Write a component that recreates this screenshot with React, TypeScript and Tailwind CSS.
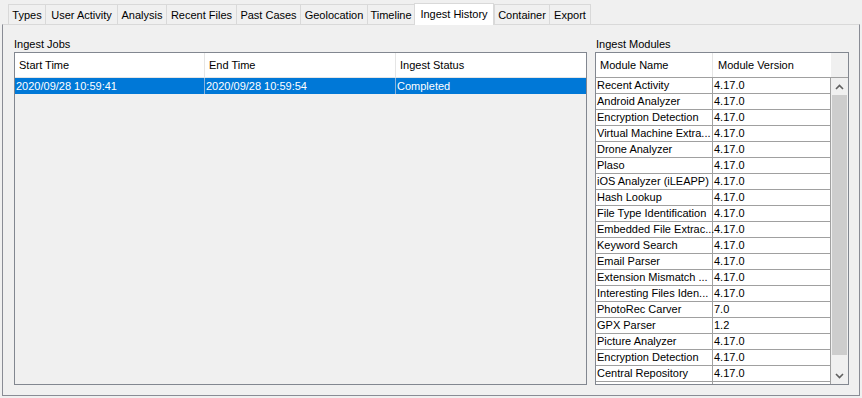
import React from "react";

const tabs: [string, number][] = [
  ["Types", 37],
  ["User Activity", 72],
  ["Analysis", 49],
  ["Recent Files", 70],
  ["Past Cases", 64],
  ["Geolocation", 67],
  ["Timeline", 47],
  ["Ingest History", 80],
  ["Container", 55],
  ["Export", 42],
];

const modules: [string, string][] = [
  ["Recent Activity", "4.17.0"],
  ["Android Analyzer", "4.17.0"],
  ["Encryption Detection", "4.17.0"],
  ["Virtual Machine Extra...", "4.17.0"],
  ["Drone Analyzer", "4.17.0"],
  ["Plaso", "4.17.0"],
  ["iOS Analyzer (iLEAPP)", "4.17.0"],
  ["Hash Lookup", "4.17.0"],
  ["File Type Identification", "4.17.0"],
  ["Embedded File Extrac...", "4.17.0"],
  ["Keyword Search", "4.17.0"],
  ["Email Parser", "4.17.0"],
  ["Extension Mismatch ...", "4.17.0"],
  ["Interesting Files Iden...", "4.17.0"],
  ["PhotoRec Carver", "7.0"],
  ["GPX Parser", "1.2"],
  ["Picture Analyzer", "4.17.0"],
  ["Encryption Detection", "4.17.0"],
  ["Central Repository", "4.17.0"],
  ["", ""],
];

function Chevron({ up }: { up?: boolean }) {
  return (
    <svg width="9" height="6" viewBox="0 0 9 6">
      <path
        d={up ? "M1 5 L4.5 1.5 L8 5" : "M1 1 L4.5 4.5 L8 1"}
        fill="none"
        stroke="#606060"
        strokeWidth="1.6"
      />
    </svg>
  );
}

export default function App() {
  return (
    <div className="w-[862px] h-[398px] bg-[#f0f0f0] text-[11px] leading-none text-black font-['Liberation_Sans',Arial,sans-serif] overflow-hidden">
      {/* Tab strip */}
      <div className="h-[24px] flex items-end pl-[8px]">
        {tabs.map(([t, w], i) => {
          const sel = t === "Ingest History";
          const last = i === tabs.length - 1;
          return sel ? (
            <div
              key={t}
              style={{ width: w }}
              className="relative z-10 -mb-px h-[22px] bg-white border-t border-l border-r border-[#d9d9d9] flex items-center justify-center pb-[1px] whitespace-nowrap"
            >
              {t}
            </div>
          ) : (
            <div
              key={t}
              style={{ width: w }}
              className={
                "h-[20px] bg-[#f0f0f0] border-t border-l border-[#d9d9d9] flex items-center justify-center pt-[1px] whitespace-nowrap " +
                (last ? "border-r" : "")
              }
            >
              {t}
            </div>
          );
        })}
      </div>

      {/* Panel */}
      <div className="ml-[2px] w-[858px] h-[372px] border-l border-r border-b border-t border-l-[#898c95] border-r-[#898c95] border-b-[#898c95] border-t-[#d9d9d9] flex pl-[11px] pr-[10px] pt-[12px] pb-[10px] gap-[8px]">
        {/* Ingest Jobs */}
        <div className="w-[573px] flex flex-col">
          <div className="h-[14px] leading-[14px]">Ingest Jobs</div>
          <div className="mt-[1px] h-[333px] border border-[#828790] bg-[#f0f0f0] flex flex-col overflow-hidden">
            <div className="h-[25px] bg-white flex border-b border-[#e5e5e5]">
              <div className="w-[190px] border-r border-[#e5e5e5] flex items-center pl-[4px]">Start Time</div>
              <div className="w-[191px] border-r border-[#e5e5e5] flex items-center pl-[4px]">End Time</div>
              <div className="w-[190px] flex items-center pl-[4px]">Ingest Status</div>
            </div>
            <div className="h-[16px] bg-[#0078d7] text-white flex">
              <div className="w-[190px] border-r border-[#8cb4dc] flex items-center pl-[1px]">2020/09/28 10:59:41</div>
              <div className="w-[191px] border-r border-[#8cb4dc] flex items-center pl-[1px]">2020/09/28 10:59:54</div>
              <div className="w-[190px] flex items-center pl-[1px]">Completed</div>
            </div>
          </div>
        </div>

        {/* Ingest Modules */}
        <div className="w-[254px] flex flex-col">
          <div className="h-[14px] leading-[14px] pl-[1px]">Ingest Modules</div>
          <div className="mt-[1px] h-[333px] border border-[#828790] bg-[#f0f0f0] flex flex-col overflow-hidden">
            <div className="h-[25px] flex border-b border-[#a0a0a0]">
              <div className="w-[117px] bg-white border-r border-[#e5e5e5] flex items-center pl-[4px]">Module Name</div>
              <div className="w-[118px] bg-white flex items-center pl-[5px]">Module Version</div>
              <div className="w-[17px] bg-[#f0f0f0]" />
            </div>
            <div className="flex flex-1 min-h-0">
              <div className="w-[235px] overflow-hidden">
                {modules.map(([n, v], i) => (
                  <div key={i} className="h-[16px] flex bg-white border-b border-[#a0a0a0]">
                    <div className="w-[117px] border-r border-[#a0a0a0] flex items-center pl-[1px] whitespace-nowrap">
                      {n}
                    </div>
                    <div className="w-[118px] border-r border-[#a0a0a0] flex items-center pl-[1px]">{v}</div>
                  </div>
                ))}
              </div>
              <div className="w-[17px] bg-[#f0f0f0] flex flex-col">
                <div className="h-[17px] flex items-center justify-center">
                  <Chevron up />
                </div>
                <div className="h-[260px] mx-[1px] bg-[#cdcdcd]" />
                <div className="flex-1" />
                <div className="h-[17px] flex items-center justify-center">
                  <Chevron />
                </div>
              </div>
            </div>
          </div>
        </div>
      </div>
    </div>
  );
}
